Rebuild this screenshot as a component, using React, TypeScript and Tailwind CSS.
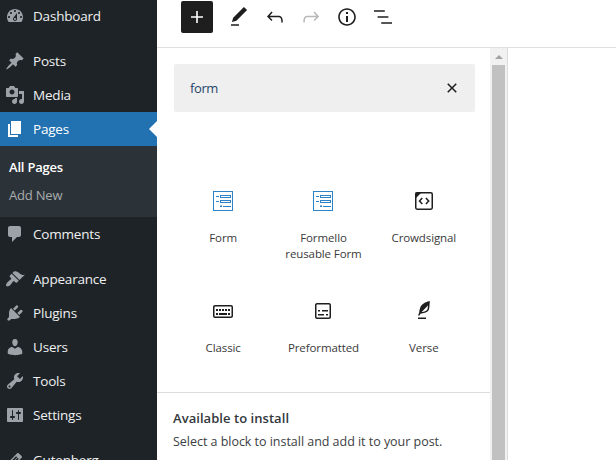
import type { ReactNode } from "react";

const paths = {
  dashboard:
    "M3.76 16h12.48c1.1-1.37 1.76-3.11 1.76-5 0-4.42-3.58-8-8-8s-8 3.58-8 8c0 1.89.66 3.63 1.76 5zM10 4c.55 0 1 .45 1 1s-.45 1-1 1-1-.45-1-1 .45-1 1-1zM6 6c.55 0 1 .45 1 1s-.45 1-1 1-1-.45-1-1 .45-1 1-1zm8 0c.55 0 1 .45 1 1s-.45 1-1 1-1-.45-1-1 .45-1 1-1zm-5.37 5.55L12 7v6c0 1.1-.9 2-2 2s-2-.9-2-2c0-.57.24-1.08.63-1.45zM4 10c.55 0 1 .45 1 1s-.45 1-1 1-1-.45-1-1 .45-1 1-1zm12 0c.55 0 1 .45 1 1s-.45 1-1 1-1-.45-1-1 .45-1 1-1zm-5 3c0-.55-.45-1-1-1s-1 .45-1 1 .45 1 1 1 1-.45 1-1z",
  post: "M10.44 3.02l1.82-1.82 6.36 6.35-1.83 1.82c-1.05-.68-2.48-.57-3.41.36l-.75.75c-.92.93-1.04 2.35-.35 3.41l-1.83 1.82-2.41-2.41-2.8 2.79c-.42.42-3.38 2.71-3.8 2.29s1.86-3.39 2.28-3.81l2.79-2.79L4.1 9.36l1.83-1.82c1.05.69 2.48.57 3.4-.36l.75-.75c.93-.92 1.05-2.35.36-3.41z",
  media:
    "M13 11V4c0-.55-.45-1-1-1h-1.67L9 1H5L3.67 3H2c-.55 0-1 .45-1 1v7c0 .55.45 1 1 1h10c.55 0 1-.45 1-1zM7 4.5c1.38 0 2.5 1.12 2.5 2.5S8.38 9.5 7 9.5 4.5 8.38 4.5 7 5.62 4.5 7 4.5zM14 6h5v10.5c0 1.38-1.12 2.5-2.5 2.5S14 17.88 14 16.5s1.12-2.5 2.5-2.5c.17 0 .34.02.5.05V9h-3V6zm-4 8.05V13h2v3.5c0 1.38-1.12 2.5-2.5 2.5S7 17.88 7 16.5 8.12 14 9.5 14c.17 0 .34.02.5.05z",
  page: "M6 15V2h10v13H6zm-1 1h8v2H3V5h2v11z",
  comments:
    "M5 2h9c1.1 0 2 .9 2 2v7c0 1.1-.9 2-2 2h-2l-5 5v-5H5c-1.1 0-2-.9-2-2V4c0-1.1.9-2 2-2z",
  appearance:
    "M14.48 11.06L7.41 3.99l1.5-1.5c.5-.56 2.3-.47 3.51.32 1.21.8 1.43 1.28 2.91 2.1 1.18.64 2.45 1.26 4.45.85zm-.71.71L6.7 4.7 4.93 6.47c-.39.39-.39 1.02 0 1.41l1.06 1.06c.39.39.39 1.03 0 1.42-.6.6-1.43 1.11-2.21 1.69-.35.26-.7.53-1.01.84C1.43 14.23.4 16.08 1.4 17.07c.99 1 2.84-.03 4.18-1.36.31-.31.58-.66.85-1.02.57-.78 1.08-1.61 1.69-2.21.39-.39 1.02-.39 1.41 0l1.06 1.06c.39.39 1.02.39 1.41 0z",
  plugins:
    "M13.11 4.36L9.87 7.6 8 5.73l3.24-3.24c.35-.34 1.05-.2 1.56.32.52.51.66 1.21.31 1.55zm-8 1.77l.91-1.12 9.01 9.01-1.19.84c-.71.71-2.63 1.16-3.82 1.16H6.14L4.9 17.26c-.59.59-1.54.59-2.12 0-.59-.58-.59-1.53 0-2.12l1.24-1.24v-3.88c0-1.13.4-3.19 1.09-3.89zm7.26 3.97l3.24-3.24c.34-.35 1.04-.21 1.55.31.52.51.66 1.21.31 1.55l-3.24 3.25z",
  users:
    "M10 9.25c-2.27 0-2.73-3.44-2.73-3.44C7 4.02 7.82 2 9.97 2c2.16 0 2.98 2.02 2.71 3.81 0 0-.41 3.44-2.68 3.44zm0 2.57L12.72 10c2.39 0 4.52 2.33 4.52 4.53v2.49s-3.65 1.13-7.24 1.13c-3.65 0-7.24-1.13-7.24-1.13v-2.49c0-2.25 1.94-4.48 4.47-4.48z",
  tools:
    "M16.68 9.77c-1.34 1.34-3.3 1.67-4.95.99l-5.41 6.52c-.99.99-2.59.99-3.58 0s-.99-2.59 0-3.57l6.52-5.42c-.68-1.65-.35-3.61.99-4.95 1.28-1.28 3.12-1.62 4.72-1.06l-2.89 2.89 2.82 2.82 2.86-2.87c.53 1.58.18 3.39-1.08 4.65zM3.81 16.21c.4.39 1.04.39 1.43 0 .4-.4.4-1.04 0-1.43-.39-.4-1.03-.4-1.43 0-.39.39-.39 1.03 0 1.43z",
  settings:
    "M18 16V4c0-.55-.45-1-1-1H3c-.55 0-1 .45-1 1v12c0 .55.45 1 1 1h14c.55 0 1-.45 1-1zM8 11h1c.55 0 1 .45 1 1s-.45 1-1 1H8v1.5c0 .28-.22.5-.5.5s-.5-.22-.5-.5V13H6c-.55 0-1-.45-1-1s.45-1 1-1h1V5.5c0-.28.22-.5.5-.5s.5.22.5.5V11zm5-2h-1c-.55 0-1-.45-1-1s.45-1 1-1h1V5.5c0-.28.22-.5.5-.5s.5.22.5.5V7h1c.55 0 1 .45 1 1s-.45 1-1 1h-1v5.5c0 .28-.22.5-.5.5s-.5-.22-.5-.5V9z",
  edit: "M13.89 3.39l2.71 2.72c.46.46.42 1.24.03 1.64l-8.01 8.02-5.56 1.16 1.16-5.58s7.6-7.63 7.99-8.03c.39-.39 1.22-.39 1.68.07zm-2.73 2.79l-5.59 5.61 1.11 1.11 5.54-5.65zm-2.97 8.23l5.58-5.6-1.07-1.08-5.59 5.6z",
  plus: "M18 11.2h-5.2V6h-1.6v5.2H6v1.6h5.2V18h1.6v-5.2H18z",
  pencil: "M20.1 5.1L16.9 2 6.2 12.7l-1.3 4.4 4.5-1.3L20.1 5.1zM4 20.8h8v-1.5H4v1.5z",
  undo: "M18.3 11.7c-.6-.6-1.4-.9-2.3-.9H6.7l2.9-3.3-1.1-1-4.5 5L8.5 16l1-1-2.7-2.7H16c.5 0 .9.2 1.3.5 1 1 1 3.4 1 4.5v.3h1.5v-.2c0-1.5 0-4.3-1.5-5.7z",
  redo: "M15.6 6.5l-1.1 1 2.9 3.3H8c-.9 0-1.7.3-2.3.9-1.4 1.5-1.4 4.2-1.4 5.6v.2h1.5v-.3c0-1.1 0-3.5 1-4.5.3-.3.7-.5 1.3-.5h9.2L14.5 15l1.1 1.1 4.6-4.6-4.6-5z",
  info: "M12 3.2c-4.8 0-8.8 3.9-8.8 8.8 0 4.8 3.9 8.8 8.8 8.8 4.8 0 8.8-3.9 8.8-8.8 0-4.8-4-8.8-8.8-8.8zm0 16c-4 0-7.2-3.3-7.2-7.2C4.8 8 8 4.8 12 4.8s7.2 3.3 7.2 7.2c0 4-3.2 7.2-7.2 7.2zM11 17h2v-6h-2v6zm0-8h2V7h-2v2z",
  list: "M13.8 5.2H3v1.5h10.8V5.2zm-3.6 12v1.5H21v-1.5H10.2zm7.2-6H6.6v1.5h10.8v-1.5z",
  close:
    "M12 13.06l3.712 3.713 1.061-1.06L13.061 12l3.712-3.712-1.06-1.06L12 10.938 8.288 7.227l-1.061 1.06L10.939 12l-3.712 3.712 1.06 1.061L12 13.061z",
  classic:
    "M20 6H4c-1.1 0-2 .9-2 2v9c0 1.1.9 2 2 2h16c1.1 0 2-.9 2-2V8c0-1.1-.9-2-2-2zm.5 11c0 .3-.2.5-.5.5H4c-.3 0-.5-.2-.5-.5V8c0-.3.2-.5.5-.5h16c.3 0 .5.2.5.5v9zM10 10H8v2h2v-2zm-5 2h2v-2H5v2zm8-2h-2v2h2v-2zm-5 6h8v-2H8v2zm6-4h2v-2h-2v2zm3 0h2v-2h-2v2zm0 4h2v-2h-2v2zM5 16h2v-2H5v2z",
  preformatted:
    "M18 4H6c-1.1 0-2 .9-2 2v12c0 1.1.9 2 2 2h12c1.1 0 2-.9 2-2V6c0-1.1-.9-2-2-2zm.5 14c0 .3-.2.5-.5.5H6c-.3 0-.5-.2-.5-.5V6c0-.3.2-.5.5-.5h12c.3 0 .5.2.5.5v12zM7 16.5h6V15H7v1.5zm4-4h6V11h-6v1.5zM9 11H7v1.5h2V11zm6 5.5h2V15h-2v1.5z",
  verse:
    "M17.8 2l-.9.3c-.1 0-3.6 1-5.2 2.1C10 5.5 9.3 6.5 8.9 7.1c-.6.9-1.7 4.7-1.7 6.3l-.9 2.3c-.2.4 0 .8.4 1 .1 0 .2.1.3.1.3 0 .6-.2.7-.5l.6-1.5c.3 0 .7-.1 1.2-.2.7-.1 1.4-.3 2.2-.5.8-.2 1.6-.5 2.4-.8.7-.3 1.4-.7 1.9-1.2s.8-1.2 1-1.9c.2-.7.3-1.6.4-2.4.1-.8.1-1.7.2-2.5 0-.8.1-1.5.2-2.1V2zm-1.9 5.6c-.1.8-.2 1.5-.3 2.1-.2.6-.4 1-.6 1.3-.3.3-.8.6-1.4.9-.7.3-1.4.5-2.2.8-.6.2-1.3.3-1.8.4L15 7.5c.3-.3.6-.7 1-1.1 0 .4 0 .8-.1 1.2zM6 20h8v-1.5H6V20z",
};

type IconName = keyof typeof paths;

function Dashicon({ name }: { name: IconName }) {
  return (
    <svg viewBox="0 0 20 20" className="size-5 shrink-0" fill="currentColor" fillRule="evenodd">
      <path d={paths[name]} />
    </svg>
  );
}

function BlockIcon({ name }: { name: IconName }) {
  return (
    <svg viewBox="0 0 24 24" className="size-6 shrink-0" fill="currentColor">
      <path d={paths[name]} />
    </svg>
  );
}

function FormIcon() {
  return (
    <svg
      viewBox="0 0 24 24"
      className="size-6 text-[#2e82c8]"
      fill="none"
      stroke="currentColor"
      shapeRendering="crispEdges"
    >
      <path d="M2.5 2.5h19v19h-19z" />
      <path d="M9.5 6.5h10v2h-10zM9.5 11.5h10v2h-10z" />
      <path d="M5 7.5h3M5 12.5h3M9 17.5h2M12 17.5h8" />
      <path d="M9 16.5h2" opacity=".55" />
    </svg>
  );
}

function CrowdsignalIcon() {
  return (
    <svg viewBox="0 0 24 24" className="size-6" fill="none" stroke="currentColor" strokeWidth="1.5">
      <rect x="3.75" y="3.75" width="16.5" height="16.5" rx="1.4" />
      <path d="M3.5 3.5h6l-6 6z" fill="currentColor" stroke="none" />
      <path d="M10.3 9L7.5 12l2.8 3M13.9 9l2.8 3-2.8 3" />
    </svg>
  );
}

function MenuItem({ icon, label, active }: { icon: IconName; label: string; active?: boolean }) {
  return (
    <a
      className={
        active
          ? "relative flex h-[34px] shrink-0 items-center gap-2 bg-[#2271b1] pl-[5px] text-white"
          : "flex h-[34px] shrink-0 items-center gap-2 pl-[5px] text-[#9ca2a7]"
      }
    >
      <Dashicon name={icon} />
      <span className={active ? "text-white" : "text-[#f0f0f1]"}>{label}</span>
      {active && (
        <i className="absolute right-0 top-[9px] border-y-8 border-r-8 border-y-transparent border-r-white" />
      )}
    </a>
  );
}

function Block({ icon, children }: { icon: ReactNode; children: ReactNode }) {
  return (
    <div className="flex h-[110px] flex-col items-center text-center text-[11.5px] leading-4 tracking-[-0.1px] text-[#1e1e1e]">
      {icon}
      <span className="mt-[17px] text-[#3a3a3a]">{children}</span>
    </div>
  );
}

function Sidebar() {
  return (
    <nav className="-mt-px flex h-[461px] w-[157px] shrink-0 flex-col overflow-hidden bg-[#1d2327] text-[13.5px] tracking-[-0.2px]">
      <MenuItem icon="dashboard" label="Dashboard" />
      <div className="mt-[11px]">
        <MenuItem icon="post" label="Posts" />
        <MenuItem icon="media" label="Media" />
        <MenuItem icon="page" label="Pages" active />
      </div>
      <div className="flex h-[71px] shrink-0 flex-col bg-[#2c3338] pl-[9px] pt-[7px] text-[13px] leading-7">
        <span className="font-semibold text-white">All Pages</span>
        <span className="text-[#a7abae]">Add New</span>
      </div>
      <MenuItem icon="comments" label="Comments" />
      <div className="mt-[11px]">
        <MenuItem icon="appearance" label="Appearance" />
        <MenuItem icon="plugins" label="Plugins" />
        <MenuItem icon="users" label="Users" />
        <MenuItem icon="tools" label="Tools" />
        <MenuItem icon="settings" label="Settings" />
      </div>
      <div className="mt-[11px]">
        <MenuItem icon="edit" label="Gutenberg" />
      </div>
    </nav>
  );
}

export default function App() {
  return (
    <div className="flex h-[460px] w-[616px] overflow-hidden bg-white font-['Open_Sans','Noto_Sans',sans-serif]">
      <Sidebar />
      <div className="flex min-w-0 flex-1 flex-col">
        <header className="flex h-12 shrink-0 items-start border-b border-[#e0e0e0] pl-6 pt-px text-[#1e1e1e]">
          <button className="mr-3.5 flex size-8 items-center justify-center rounded-[2px] bg-[#1e1e1e] text-white">
            <BlockIcon name="plus" />
          </button>
          <div className="flex h-8 items-center gap-3">
            <BlockIcon name="pencil" />
            <BlockIcon name="undo" />
            <span className="text-[#b8b8b8]">
              <BlockIcon name="redo" />
            </span>
            <BlockIcon name="info" />
            <BlockIcon name="list" />
          </div>
        </header>
        <div className="flex min-h-0 flex-1">
          <section className="flex w-[333px] flex-col">
            <div className="ml-[17px] mt-4 flex h-12 w-[301px] shrink-0 items-center justify-between rounded-[2px] bg-[#efefef] pl-4 pr-[11px]">
              <span className="pt-0.5 text-[13px] tracking-[-0.4px] text-[#1f4569]">form</span>
              <span className="text-[#1e1e1e]">
                <BlockIcon name="close" />
              </span>
            </div>
            <div className="ml-4 mt-[77px] grid h-[203px] w-[301px] shrink-0 grid-cols-3">
              <Block icon={<FormIcon />}>Form</Block>
              <Block icon={<FormIcon />}>
                Formello
                <br />
                reusable Form
              </Block>
              <Block icon={<CrowdsignalIcon />}>Crowdsignal</Block>
              <Block icon={<BlockIcon name="classic" />}>Classic</Block>
              <Block icon={<BlockIcon name="preformatted" />}>Preformatted</Block>
              <Block icon={<BlockIcon name="verse" />}>Verse</Block>
            </div>
            <div className="flex-1 border-t border-[#ddd] pl-4 pt-[15px]">
              <h2 className="text-[13px] font-semibold leading-5 tracking-[0.05px] text-[#32373c]">
                Available to install
              </h2>
              <p className="mt-1 text-[12.5px] leading-5 tracking-[-0.03px] text-[#3c4043]">
                Select a block to install and add it to your post.
              </p>
            </div>
          </section>
          <div className="flex w-[18px] flex-col items-center border-r border-[#ddd] bg-[#f1f1f1] pt-[7px]">
            <i className="border-x-4 border-b-4 border-x-transparent border-b-[#a3a3a3]" />
            <div className="mt-1.5 w-[13px] flex-1 bg-[#c1c1c1]" />
          </div>
        </div>
      </div>
    </div>
  );
}
